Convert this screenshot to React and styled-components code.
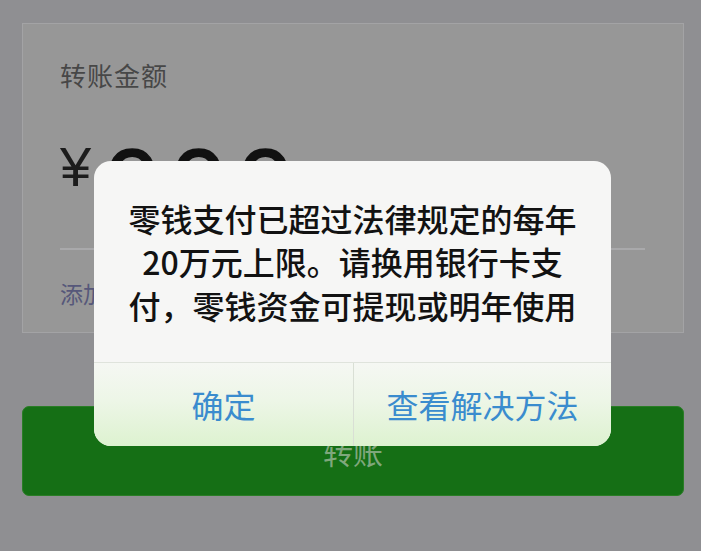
import React from 'react';
import styled, { createGlobalStyle } from 'styled-components';

const GlobalStyle = createGlobalStyle`
  html, body {
    margin: 0;
    padding: 0;
    background: #8f8f92;
  }
  body {
    font-family: "Noto Sans CJK SC", "Noto Sans", sans-serif;
  }
`;

// --- Transfer page (dimmed behind the alert) ---
const Page = styled.div`
  position: relative;
  width: 701px;
  height: 551px;
  box-sizing: border-box;
  padding: 23px 17px 0 22px;
  display: flex;
  flex-direction: column;
  gap: 73px;
  overflow: hidden;
`;

const AmountCard = styled.section`
  height: 310px;
  box-sizing: border-box;
  background: #979797;
  border: 1.5px solid #a3a3a5;
  padding: 36px 38px 0 37px;
  display: flex;
  flex-direction: column;
`;

const Label = styled.div`
  font-size: 26px;
  line-height: 30px;
  color: #474747;
  letter-spacing: 1px;
`;

const AmountRow = styled.div`
  margin-top: 40px;
  height: 118px;
  display: flex;
  align-items: flex-start;
  gap: 13px;
`;

const Currency = styled.span`
  font-family: "Liberation Sans", "DejaVu Sans", sans-serif;
  font-size: 56px;
  line-height: 60px;
  margin-top: 7px;
  color: #1c1c1c;
`;

const Digits = styled.span`
  font-family: "Liberation Sans", sans-serif;
  font-size: 100px;
  line-height: 100px;
  margin-top: 4px;
  letter-spacing: 11px;
  -webkit-text-stroke: 1.5px #111;
  color: #111;
`;

const Divider = styled.div`
  height: 2px;
  background: #a9a9ab;
`;

const NoteLink = styled.div`
  margin-top: 30px;
  font-size: 23px;
  line-height: 26px;
  color: #56577a;
`;

const TransferButton = styled.button`
  height: 90px;
  border-radius: 7px;
  border: 1.5px solid #2a7d26;
  background: #156f15;
  color: #7fa77c;
  font-family: inherit;
  font-size: 30px;
  padding: 0;
  display: flex;
  align-items: center;
  justify-content: center;
`;

// --- Alert overlay ---
const Alert = styled.div`
  position: absolute;
  left: 94px;
  top: 161px;
  width: 517px;
  height: 285px;
  border-radius: 17px;
  overflow: hidden;
  background: #f6f6f5;
  display: flex;
  flex-direction: column;
`;

const Message = styled.div`
  height: 200px;
  display: flex;
  flex-direction: column;
  align-items: center;
  justify-content: center;
  font-size: 32px;
  line-height: 43.5px;
  font-weight: 500;
  color: #121212;
  padding-top: 1px;
`;

const Line = styled.span`
  display: block;
  white-space: nowrap;
`;

const Actions = styled.div`
  flex: 1;
  display: grid;
  grid-template-columns: 259px 1fr;
  border-top: 1.5px solid #dfe3dc;
  background: linear-gradient(to bottom, #f5f7f3 0%, #edf6e7 45%, #ddf2d0 100%);
`;

const Action = styled.button`
  border: none;
  background: transparent;
  padding: 0 0 2px;
  font-family: inherit;
  font-size: 32px;
  color: #3a8cce;
  display: flex;
  align-items: center;
  justify-content: center;
  border-left: ${p => (p.$divided ? '1.5px solid #d9dfd5' : 'none')};
`;

export default function App() {
  return (
    <>
      <GlobalStyle />
      <Page>
        <AmountCard>
          <Label>转账金额</Label>
          <AmountRow>
            <Currency>¥</Currency>
            <Digits>000</Digits>
          </AmountRow>
          <Divider />
          <NoteLink>添加转账说明</NoteLink>
        </AmountCard>
        <TransferButton>转账</TransferButton>

        <Alert>
          <Message>
            <Line>零钱支付已超过法律规定的每年</Line>
            <Line>20万元上限。请换用银行卡支</Line>
            <Line>付，零钱资金可提现或明年使用</Line>
          </Message>
          <Actions>
            <Action>确定</Action>
            <Action $divided>查看解决方法</Action>
          </Actions>
        </Alert>
      </Page>
    </>
  );
}
